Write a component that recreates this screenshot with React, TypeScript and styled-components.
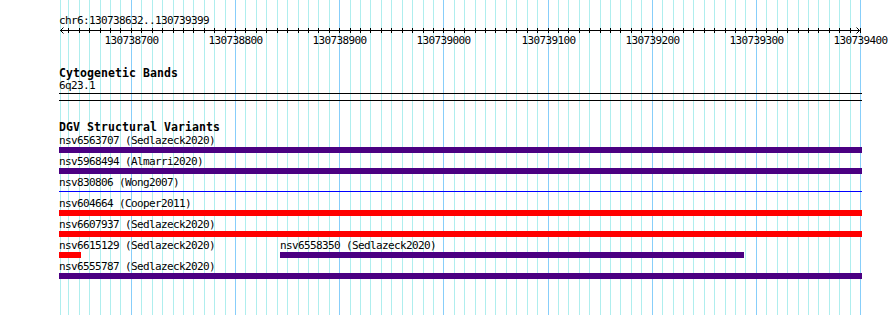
import React from "react";
import styled, { createGlobalStyle } from "styled-components";

const VIEW_START = 130738632;
const VIEW_END = 130739399;
const PANEL_LEFT = 60;
const PANEL_WIDTH = 800;
const BP_PX = PANEL_WIDTH / (VIEW_END - VIEW_START + 1);
const CLIP_LEFT = 59;
const CLIP_RIGHT = 862;
const PAGE_W = 890;
const PAGE_H = 315;
const MONO = '"DejaVu Sans Mono", "Liberation Mono", monospace';

const toPx = (pos: number) => Math.round(PANEL_LEFT + (pos - VIEW_START) * BP_PX);
const clampPx = (x: number) => Math.min(CLIP_RIGHT, Math.max(CLIP_LEFT, x));

type Kind = "complex" | "loss" | "insertion";

interface Variant {
  id: string;
  study: string;
  start: number;
  end: number;
  kind: Kind;
}

// each inner array is one row of the track
const variants: Variant[][] = [
  [{ id: "nsv6563707", study: "Sedlazeck2020", start: 130738100, end: 130739900, kind: "complex" }],
  [{ id: "nsv5968494", study: "Almarri2020", start: 130738200, end: 130739800, kind: "complex" }],
  [{ id: "nsv830806", study: "Wong2007", start: 130738300, end: 130739700, kind: "insertion" }],
  [{ id: "nsv604664", study: "Cooper2011", start: 130738000, end: 130740000, kind: "loss" }],
  [{ id: "nsv6607937", study: "Sedlazeck2020", start: 130738400, end: 130739600, kind: "loss" }],
  [
    { id: "nsv6615129", study: "Sedlazeck2020", start: 130738500, end: 130738652, kind: "loss" },
    { id: "nsv6558350", study: "Sedlazeck2020", start: 130738843, end: 130739289, kind: "complex" },
  ],
  [{ id: "nsv6555787", study: "Sedlazeck2020", start: 130738450, end: 130739550, kind: "complex" }],
];

const gridPositions: number[] = [];
for (let p = Math.ceil(VIEW_START / 10) * 10; p <= VIEW_END + 1; p += 10) gridPositions.push(p);

const GlobalStyle = createGlobalStyle`
  html, body {
    margin: 0;
    padding: 0;
    background: #ffffff;
  }
  body {
    font-family: ${MONO};
    color: #000000;
  }
`;

const Page = styled.div`
  position: relative;
  width: ${PAGE_W}px;
  height: ${PAGE_H}px;
  overflow: hidden;
  background: #ffffff;
`;

const GridLayer = styled.svg`
  position: absolute;
  inset: 0;
  display: block;
`;

const Content = styled.div`
  position: relative;
  display: flex;
  flex-direction: column;
`;

const Coordinates = styled.div`
  padding: 15px 0 0 ${CLIP_LEFT}px;
  font-size: 11px;
  line-height: 12px;
  height: 13px;
  letter-spacing: -0.62px;
  white-space: pre;
`;

const RulerSvg = styled.svg`
  display: block;
  overflow: visible;
`;

const Track = styled.section<{ $gap: number }>`
  margin-top: ${(p) => p.$gap}px;
  padding-left: ${CLIP_LEFT}px;
  display: flex;
  flex-direction: column;
`;

const TrackTitle = styled.h3`
  margin: 0;
  font-size: 11.5px;
  font-weight: 700;
  line-height: 12px;
  height: 13px;
  letter-spacing: 0.08px;
  white-space: pre;
`;

const BandLabel = styled.div`
  font-size: 11px;
  line-height: 12px;
  height: 13px;
  letter-spacing: -0.62px;
`;

const BandBox = styled.div`
  width: ${CLIP_RIGHT - CLIP_LEFT}px;
  height: 6px;
  border-top: 1px solid #000000;
  border-bottom: 1px solid #000000;
  background: transparent;
`;

const FeatureList = styled.div`
  padding-top: 1px;
  display: flex;
  flex-direction: column;
`;

const Row = styled.div`
  display: grid;
  height: 21px;
`;

const Feature = styled.div`
  grid-area: 1 / 1;
  display: flex;
  flex-direction: column;
  align-items: flex-start;
`;

const Label = styled.div`
  font-size: 11px;
  line-height: 12px;
  height: 12px;
  letter-spacing: -0.62px;
  white-space: pre;
`;

const barColors: Record<Kind, string> = {
  complex: "#4b0082",
  loss: "#ff0000",
  insertion: "#0000ff",
};

const Bar = styled.div<{ $kind: Kind }>`
  height: ${(p) => (p.$kind === "insertion" ? 1 : 6)}px;
  margin: ${(p) => (p.$kind === "insertion" ? "2px 0 3px" : "0")};
  background: ${(p) => barColors[p.$kind]};
`;

function Grid() {
  return (
    <GridLayer width={PAGE_W} height={PAGE_H}>
      <rect x={PANEL_LEFT} y={0} width={1} height={PAGE_H} fill="#afeeee" />
      {gridPositions.map((p) => (
        <rect
          key={p}
          x={toPx(p)}
          y={0}
          width={1}
          height={PAGE_H}
          fill={p % 100 === 0 ? "#87cefa" : "#afeeee"}
        />
      ))}
    </GridLayer>
  );
}

function Ruler() {
  const left = PANEL_LEFT;
  const right = PANEL_LEFT + PANEL_WIDTH;
  return (
    <RulerSvg width={PAGE_W} height={20}>
      <rect x={left} y={2} width={right - left} height={1} fill="#000" />
      <path
        d={`M${left + 3.5},-0.5 L${left + 0.5},2.5 L${left + 3.5},5.5 M${right - 3.5},-0.5 L${right - 0.5},2.5 L${right - 3.5},5.5`}
        stroke="#000"
        fill="none"
      />
      {gridPositions.map((p) => (
        <rect key={p} x={toPx(p)} y={0} width={1} height={5} fill="#000" />
      ))}
      {gridPositions
        .filter((p) => p % 100 === 0)
        .map((p) => (
          <text
            key={p}
            x={toPx(p) + 0.5}
            y={16}
            textAnchor="middle"
            fontFamily={MONO}
            fontSize={11}
            letterSpacing={-0.62}
            fill="#000"
          >
            {p}
          </text>
        ))}
    </RulerSvg>
  );
}

function VariantFeature({ v }: { v: Variant }) {
  const x0 = clampPx(toPx(v.start));
  const x1 = clampPx(toPx(v.end));
  return (
    <Feature style={{ marginLeft: x0 - CLIP_LEFT }}>
      <Label>{`${v.id} (${v.study})`}</Label>
      <Bar $kind={v.kind} style={{ width: x1 - x0 }} />
    </Feature>
  );
}

export default function App() {
  return (
    <>
      <GlobalStyle />
      <Page>
        <Grid />
        <Content>
          <Coordinates>{`chr6:${VIEW_START}..${VIEW_END}`}</Coordinates>
          <Ruler />
          <Track $gap={19}>
            <TrackTitle>Cytogenetic Bands</TrackTitle>
            <BandLabel>6q23.1</BandLabel>
            <BandBox />
          </Track>
          <Track $gap={20}>
            <TrackTitle>DGV Structural Variants</TrackTitle>
            <FeatureList>
              {variants.map((row, i) => (
                <Row key={i}>
                  {row.map((v) => (
                    <VariantFeature key={v.id} v={v} />
                  ))}
                </Row>
              ))}
            </FeatureList>
          </Track>
        </Content>
      </Page>
    </>
  );
}
